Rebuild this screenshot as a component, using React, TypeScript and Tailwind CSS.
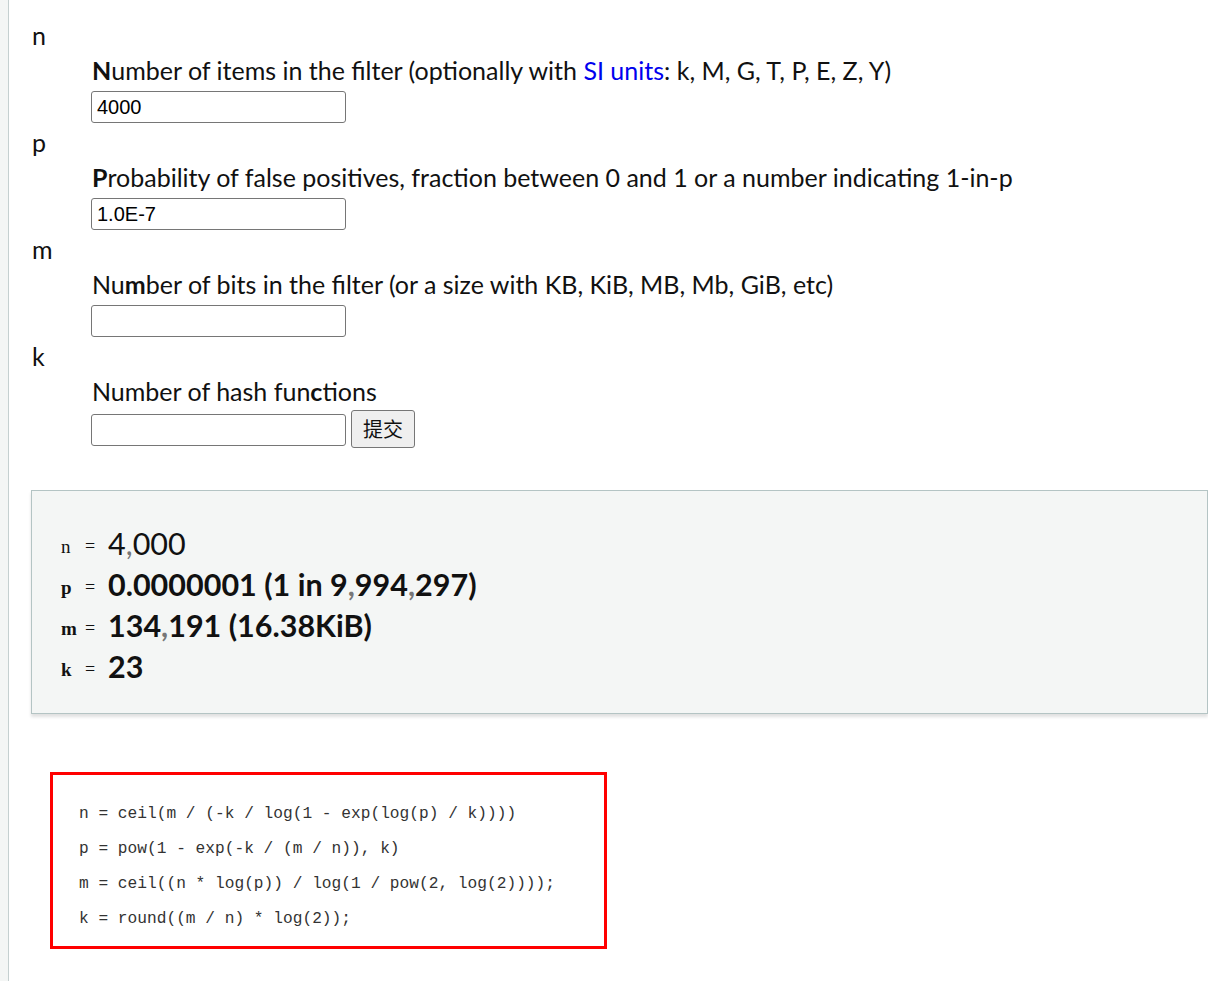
import React from 'react';

const sans = "font-['Lato','Noto_Sans',sans-serif]";

const Field = ({ name, label, value, button }: { name: string; label: React.ReactNode; value: string; button?: boolean }) => (
  <div>
    <div className="h-[36px] leading-[34px] pl-[23px] text-[25px]">{name}</div>
    <div className="h-[36px] leading-[32px] pl-[83px] text-[25px]">{label}</div>
    <div className={`${button ? 'h-[37px] pt-[2px]' : 'h-[35px]'} pl-[82px] flex items-start gap-[5px]`}>
      <input
        defaultValue={value}
        className="mt-px w-[255px] h-[32px] border border-[#767676] rounded-[3px] px-[5px] text-[20px] font-['Liberation_Sans',Arial,sans-serif] text-black bg-white"
      />
      {button && (
        <button className="-mt-[3px] w-[64px] h-[38px] border border-[#767676] rounded-[3px] bg-[#efefef] text-[20px] font-['Noto_Sans_CJK_SC',sans-serif]">
          提交
        </button>
      )}
    </div>
  </div>
);

const Comma = () => <span className="text-[#777]">,</span>;

const Row = ({ k, bold, children }: { k: string; bold?: boolean; children: React.ReactNode }) => (
  <div className="h-[41px] flex items-center">
    <span className={`w-[24px] text-[19px] font-['Liberation_Serif',serif] translate-y-[4px] ${bold ? 'font-bold' : ''}`}>{k}</span>
    <span className="w-[23px] text-[18px] font-['Liberation_Serif',serif] translate-y-[3px]">=</span>
    <span className={`text-[30.5px] ${sans}`}>{children}</span>
  </div>
);

export default function App() {
  return (
    <div className="min-h-[981px] bg-[#f4f6f5] pl-[9px] overflow-hidden">
      <div className={`min-h-[981px] bg-white border-l border-[#c5d0d0] -ml-px text-[#111] ${sans}`}>
        <div className="pt-[18px]">
          <Field
            name="n"
            value="4000"
            label={
              <>
                <b>N</b>umber of items in the filter (optionally with <span className="text-[#0000ee]">SI units</span>: k, M, G, T, P, E, Z, Y)
              </>
            }
          />
          <Field
            name="p"
            value="1.0E-7"
            label={
              <>
                <b>P</b>robability of false positives, fraction between 0 and 1 or a number indicating 1-in-p
              </>
            }
          />
          <Field
            name="m"
            value=""
            label={
              <>
                Nu<b>m</b>ber of bits in the filter (or a size with KB, KiB, MB, Mb, GiB, etc)
              </>
            }
          />
          <Field
            name="k"
            value=""
            button
            label={
              <>
                Number of hash fun<b>c</b>tions
              </>
            }
          />
        </div>

        <div className="mt-[42px] ml-[22px] h-[224px] bg-[#f4f6f5] border border-[#b4c4c4] shadow-[0_3px_3px_rgba(0,0,0,0.12)] pl-[29px] pt-[32px]">
          <Row k="n">
            4<Comma />000
          </Row>
          <Row k="p" bold>
            <b>
              0.0000001 (1 in 9<Comma />994<Comma />297)
            </b>
          </Row>
          <Row k="m" bold>
            <b>
              134<Comma />191 (16.38KiB)
            </b>
          </Row>
          <Row k="k" bold>
            <b>23</b>
          </Row>
        </div>

        <div className="mt-[58px] ml-[41px] w-[557px] h-[177px] border-[3px] border-[#ff0000] pl-[26px] pt-[22px] font-['Liberation_Mono',monospace] text-[16.2px] text-[#333]">
          <div className="h-[35px] leading-[35px]">n = ceil(m / (-k / log(1 - exp(log(p) / k))))</div>
          <div className="h-[35px] leading-[35px]">p = pow(1 - exp(-k / (m / n)), k)</div>
          <div className="h-[35px] leading-[35px]">m = ceil((n * log(p)) / log(1 / pow(2, log(2))));</div>
          <div className="h-[35px] leading-[35px]">k = round((m / n) * log(2));</div>
        </div>
      </div>
    </div>
  );
}
